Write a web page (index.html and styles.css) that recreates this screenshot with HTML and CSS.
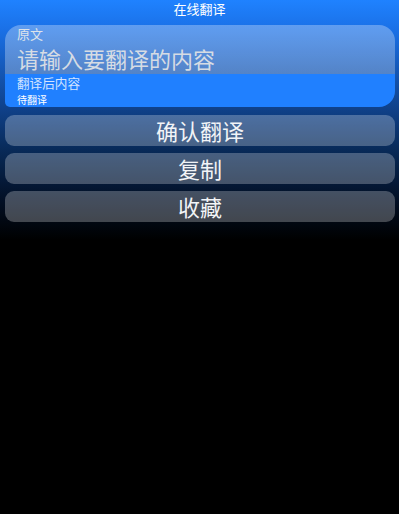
FILE: index.html
```html
<!DOCTYPE html>
<html lang="zh-CN">
<head>
<meta charset="utf-8">
<title>在线翻译</title>
<link rel="stylesheet" href="styles.css">
</head>
<body>
<div class="app">
  <header class="titlebar">在线翻译</header>
  <main class="content">
    <section class="card">
      <div class="source">
        <div class="label">原文</div>
        <input class="source-input" type="text" placeholder="请输入要翻译的内容">
      </div>
      <div class="result">
        <div class="label result-label">翻译后内容</div>
        <div class="result-text">待翻译</div>
      </div>
    </section>
    <div class="actions">
      <button class="btn">确认翻译</button>
      <button class="btn">复制</button>
      <button class="btn">收藏</button>
    </div>
  </main>
</div>
</body>
</html>
```

FILE: styles.css
```css
html {
  background-color: #000;
  background-image: linear-gradient(to bottom, #1f82ff 0, #1a70e6 30px, #0f4088 110px, #082a58 150px, #03122a 195px, #000 240px);
  background-repeat: no-repeat;
  min-height: 100%;
}

body {
  margin: 0;
  font-family: "Noto Sans CJK SC", "Noto Sans", "DejaVu Sans", sans-serif;
  color: #fff;
}

.app {
  display: flex;
  flex-direction: column;
}

.titlebar {
  height: 18px;
  line-height: 18px;
  font-size: 13px;
  text-align: center;
  color: #fff;
}

.content {
  padding: 7px 4px 0 5px;
  display: flex;
  flex-direction: column;
  gap: 8px;
}

.card {
  border-radius: 16px 16px 16px 5px;
  overflow: hidden;
  display: flex;
  flex-direction: column;
}

.source {
  height: 49px;
  box-sizing: border-box;
  padding: 1px 12px 0;
  background: linear-gradient(to bottom, rgba(255,255,255,0.3), rgba(255,255,255,0.27));
  display: flex;
  flex-direction: column;
}

.label {
  font-size: 13px;
  line-height: 16px;
  color: #dde3ea;
}

.source-input {
  display: block;
  width: 100%;
  height: 32px;
  margin: 0;
  padding: 0;
  border: 0;
  outline: none;
  background: transparent;
  font-family: inherit;
  font-size: 22px;
  line-height: 32px;
  color: #fff;
}

.source-input::placeholder {
  color: #d6dce4;
  opacity: 1;
}

.result {
  height: 33px;
  box-sizing: border-box;
  padding: 0 12px;
  background: #2080ff;
}

.result-label {
  font-size: 12.6px;
  line-height: 18px;
  color: #d4e4ff;
}

.result-text {
  font-size: 10px;
  line-height: 15px;
  color: #fff;
}

.actions {
  display: flex;
  flex-direction: column;
  gap: 7px;
}

.btn {
  display: block;
  width: 100%;
  height: 31px;
  margin: 0;
  padding: 0;
  border: 0;
  border-radius: 9px;
  background: rgba(255,255,255,0.26);
  font-family: inherit;
  font-size: 22px;
  line-height: 31px;
  color: #f2f4f7;
  text-align: center;
}
```
